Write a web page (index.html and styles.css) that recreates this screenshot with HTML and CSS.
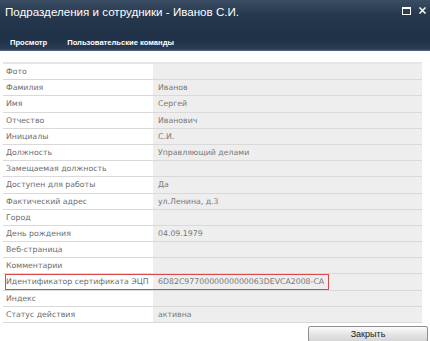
FILE: index.html
```html
<!DOCTYPE html>
<html lang="ru">
<head>
    <meta charset="UTF-8">
    <title>Подразделения и сотрудники - Иванов С.И.</title>
    <link rel="stylesheet" href="styles.css">
</head>
<body>
    <div class="dialog-head">
        <div class="title-bar">
            <span class="title">Подразделения и сотрудники - Иванов С.И.</span>
            <span class="win-buttons">
                <svg width="9" height="8" viewBox="0 0 9 8"><rect x="0.5" y="0.5" width="8" height="7" fill="none" stroke="#fff"/><rect x="0.5" y="0.5" width="8" height="1.5" fill="#fff"/></svg>
                <svg width="7" height="7" viewBox="0 0 7 7"><path d="M0.5 0.5 L6.5 6.5 M6.5 0.5 L0.5 6.5" stroke="#fff" stroke-width="1.5"/></svg>
            </span>
        </div>
        <div class="tabs">
            <span class="tab">Просмотр</span>
            <span class="tab">Пользовательские команды</span>
        </div>
    </div>

    <div class="form-table">
        <div class="row"><div class="label">Фото</div><div class="value"></div></div>
        <div class="row"><div class="label">Фамилия</div><div class="value">Иванов</div></div>
        <div class="row"><div class="label">Имя</div><div class="value">Сергей</div></div>
        <div class="row"><div class="label">Отчество</div><div class="value">Иванович</div></div>
        <div class="row"><div class="label">Инициалы</div><div class="value">С.И.</div></div>
        <div class="row"><div class="label">Должность</div><div class="value">Управляющий делами</div></div>
        <div class="row"><div class="label">Замещаемая должность</div><div class="value"></div></div>
        <div class="row"><div class="label">Доступен для работы</div><div class="value">Да</div></div>
        <div class="row"><div class="label">Фактический адрес</div><div class="value">ул.Ленина, д.3</div></div>
        <div class="row"><div class="label">Город</div><div class="value"></div></div>
        <div class="row"><div class="label">День рождения</div><div class="value">04.09.1979</div></div>
        <div class="row"><div class="label">Веб-страница</div><div class="value"></div></div>
        <div class="row"><div class="label">Комментарии</div><div class="value"></div></div>
        <div class="row marked"><div class="label">Идентификатор сертификата ЭЦП</div><div class="value">6D82C9770000000000063DEVCA2008-CA</div><span class="mark"></span></div>
        <div class="row"><div class="label">Индекс</div><div class="value"></div></div>
        <div class="row"><div class="label">Статус действия</div><div class="value">активна</div></div>
    </div>

    <div class="footer">
        <button class="close-button">Закрыть</button>
    </div>
</body>
</html>
```

FILE: styles.css
```css
body {
    margin: 0;
    width: 430px;
    font-family: "DejaVu Sans", sans-serif;
    background: #fff;
}
.dialog-head {
    height: 51px;
    background: linear-gradient(to bottom, #3b4d63 0%, #26384e 30%, #1f3147 75%, #2a3c52 96%, #56687e 100%);
    color: #fff;
}
.title-bar {
    display: flex;
    justify-content: space-between;
    align-items: flex-start;
    padding: 5px 4px 0 5px;
    height: 33px;
}
.title {
    font-family: "Liberation Sans", sans-serif;
    font-size: 11.6px;
}
.win-buttons {
    display: flex;
    gap: 8px;
    padding-top: 2px;
}
.tabs {
    display: flex;
    gap: 20px;
    padding-left: 10px;
}
.tab {
    font-family: "Liberation Sans", sans-serif;
    font-weight: bold;
    font-size: 7.6px;
}
.form-table {
    margin: 11px 8px 0 3px;
    border-top: 2px solid #e6e6e6;
}
.row {
    position: relative;
    display: grid;
    grid-template-columns: 150px 1fr;
    height: 16.2px;
    box-sizing: border-box;
    border-bottom: 1px solid #d9d9d9;
    font-size: 7.8px;
    color: #6b6b6b;
}
.label {
    padding-left: 3px;
    line-height: 15px;
    white-space: nowrap;
}
.value {
    background: #eeeeee;
    padding-left: 5px;
    line-height: 15px;
    color: #777;
    white-space: nowrap;
}
.mark {
    position: absolute;
    left: 2px;
    top: 0;
    width: 322px;
    height: 14px;
    border: 1px solid #d94a4a;
}
.footer {
    display: flex;
    justify-content: flex-end;
    padding: 3px 2px 0 0;
}
.close-button {
    width: 120px;
    height: 16px;
    padding: 0;
    font-family: "Liberation Sans", sans-serif;
    font-size: 9px;
    color: #222;
    background: linear-gradient(to bottom, #fbfbfb, #e4e4e4 55%, #d6d6d6);
    border: 1px solid #8f8f8f;
    border-radius: 2px;
}
```
